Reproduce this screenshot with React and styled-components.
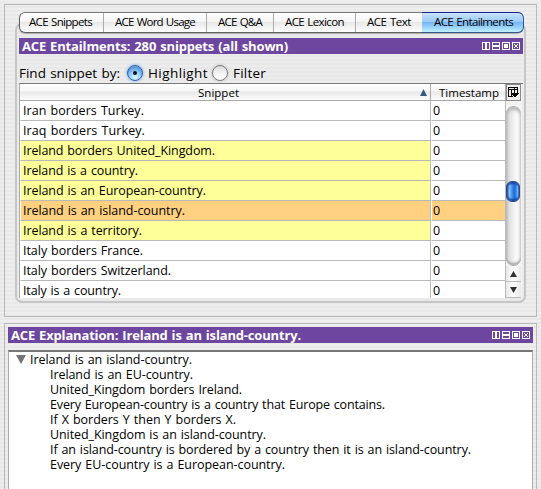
import React, { useLayoutEffect, useRef, useState } from 'react';
import styled, { createGlobalStyle } from 'styled-components';

const GlobalStyle = createGlobalStyle`
  * { box-sizing: border-box; }
  body {
    margin: 0;
    overflow: hidden;
    color: #000;
    font: 12.5px "Open Sans", "Noto Sans", sans-serif;
    background: repeating-linear-gradient(#eeeeee 0 2px, #e8e8e8 2px 4px);
  }
`;

const Window = styled.div`
  height: 489px;
  padding: 4px 4px 0 4px;
  overflow: hidden;
`;

const Panel = styled.section`
  height: ${(p) => p.$height}px;
  margin-bottom: 6px;
  border: 1px solid #b9b9b9;
  padding: ${(p) => p.$padding};
`;

const TabPanel = styled.div`
  display: flex;
  flex-direction: column;
  height: 280px;
  border: 2px solid #c6c6c6;
  border-top-color: #b0b0b0;
  border-radius: 7px;
  padding: 0 0 0 2px;
  background: repeating-linear-gradient(#ececec 0 2px, #e8e8e8 2px 4px);
`;

const Tabs = styled.nav`
  display: grid;
  grid-template-columns: 83px 103px 67px 82px 67px 101px;
  flex: none;
  width: 504px;
  height: 21px;
  margin-top: -13px;
  border: 1px solid #626262;
  border-top-color: #777;
  border-radius: 6px;
  background: linear-gradient(#fff 0, #f4f4f4 45%, #e8e8e8 50%, #fff 100%);
  box-shadow: 0 1px 1px #aaa;
`;

const Tab = styled.div`
  height: 19px;
  padding-left: ${(p) => p.$inset}px;
  border-left: ${(p) => (p.$first ? 0 : '1px solid #aaa')};
  font-size: 11.5px;
  line-height: 18px;
  ${(p) => p.$active && `
    height: 21px;
    margin: -1px -1px 0 0;
    border: 1px solid #35588e;
    border-top-color: #17268b;
    border-left: 0;
    border-radius: 0 6px 6px 0;
    background: linear-gradient(#c9e2fa 0, #9bcaf5 45%, #75b6f2 50%, #bff0ff 100%);
  `}
`;

const TitleBar = styled.header`
  display: flex;
  flex: none;
  align-items: center;
  justify-content: space-between;
  width: ${(p) => p.$width}px;
  height: 16px;
  margin-top: ${(p) => p.$top}px;
  padding: 0 3px;
  background: #6c469f;
  color: #fff;
  font-size: 13px;
  font-weight: 700;
  line-height: 15px;
`;

const FindRow = styled.div`
  display: flex;
  flex: none;
  align-items: center;
  height: 29px;
  padding-top: 9px;
  font-size: 13.5px;
  line-height: 18px;
`;

const Radio = styled.span`
  display: flex;
  align-items: center;
  justify-content: center;
  width: 16px;
  height: 16px;
  margin: 0 ${(p) => p.$after}px 0 ${(p) => p.$before}px;
  border: 1px solid ${(p) => (p.$on ? '#3a5ea0' : '#777')};
  border-radius: 50%;
  background: ${(p) => p.$on
    ? 'radial-gradient(circle at 50% 80%, #d9fbff 0, #8fc8f6 45%, #5796dc 75%, #c7e0f8 100%)'
    : 'linear-gradient(#d8d8d8, #f4f4f4 50%, #fff)'};
  box-shadow: 0 0 3px ${(p) => (p.$on ? '#4da0ec' : '#bbb')};

  &::after {
    content: '';
    width: 4px;
    height: 4px;
    border-radius: 50%;
    background: ${(p) => (p.$on ? '#071225' : 'transparent')};
  }
`;

const TableFrame = styled.div`
  display: grid;
  grid-template-columns: 486px 16px;
  flex: none;
  width: 504px;
  height: 215px;
  border-top: 1px solid #777;
  border-left: 1px solid #aaa;
  overflow: hidden;
`;

const TableBody = styled.div`
  background: #fff;
  overflow: hidden;
`;

const HeaderRow = styled.div`
  display: grid;
  grid-template-columns: 411px 75px;
  height: 17px;
  border-bottom: 1px solid #aaa;
  background: linear-gradient(#fff 0, #f7f7f7 40%, #e9e9e9 50%, #fbfbfb 100%);
  font-size: 11.5px;
  line-height: 15px;
`;

const HeaderCell = styled.div`
  display: flex;
  align-items: center;
  justify-content: space-between;
  padding: 0 ${(p) => p.$right}px 0 ${(p) => p.$left}px;
  border-right: 1px solid #aaa;
`;

const SnippetRow = styled.div`
  display: grid;
  grid-template-columns: 411px 75px;
  height: 20px;
  line-height: 19px;
`;

const rowColors = { plain: '#fff', match: '#ffff99', selected: '#ffd080' };

const SnippetCell = styled.div`
  padding-left: ${(p) => (p.$narrow ? 1 : 2)}px;
  border-right: 1px solid #b9b9b9;
  border-bottom: 1px solid #b9b9b9;
  border-left: 1px solid #fff;
  background: ${(p) => rowColors[p.$tone]};
  white-space: nowrap;
`;

const ScrollColumn = styled.div`
  display: flex;
  flex-direction: column;
  background: #f4f4f4;
`;

const ColumnButton = styled.div`
  display: flex;
  flex: none;
  width: 15px;
  height: 17px;
  border: 1px solid #888;
  background: #eee;
`;

const ScrollTrack = styled.div`
  flex: none;
  height: 160px;
  width: 15px;
  padding-top: 74px;
  border: 1px solid #b4b4b4;
  border-width: 1px 0;
  border-radius: 8px;
  margin-top: 5px;
  background: linear-gradient(90deg, #c4c4c4 0, #e2e2e2 25%, #fafafa 70%, #e8e8e8 100%);
  box-shadow: inset 0 3px 3px #bbb, inset 0 -2px 2px #aaa;
`;

const ScrollThumb = styled.div`
  width: 14px;
  height: 21px;
  border: 1px solid #35497c;
  border-radius: 6px;
  background: linear-gradient(90deg, #194dac 0, #8cc0f8 22%, #4a97ee 38%, #2468dc 60%, #2f7ee8 75%, #76c5ff 90%, #204a9b 100%);
  box-shadow: inset 0 3px 2px -1px #1849a7, inset 0 -3px 2px -1px #1248a0;
`;

const ScrollArrow = styled.div`
  display: flex;
  align-items: center;
  justify-content: center;
  flex: none;
  width: 15px;
  height: 16px;
  border-bottom: 1px solid #bbb;
  background: linear-gradient(90deg, #e8e8e8, #fff 50%, #e9e9e9);
`;

const Explanation = styled.div`
  width: 525px;
  height: 140px;
  margin-top: 7px;
  padding: 0 0 0 7px;
  border: 1px solid #aaa;
  border-top: 2px solid #777;
  background: #fff;
`;

const TreeLine = styled.div`
  display: flex;
  align-items: center;
  gap: 4px;
  height: 15px;
  line-height: 15px;
  padding-left: ${(p) => (p.$child ? 34 : 0)}px;
`;

const Label = styled.span`
  display: inline-block;
  white-space: nowrap;
  word-spacing: 0.8px;
`;

/* Tracks a label so that it fills its allotted width. */
function FitLabel({ text, width }) {
  const ref = useRef(null);
  const [spacing, setSpacing] = useState(0);
  useLayoutEffect(() => {
    ref.current.style.letterSpacing = '0px';
    const natural = ref.current.getBoundingClientRect().width;
    const next = (width - natural) / text.length;
    ref.current.style.letterSpacing = `${next}px`;
    setSpacing(next);
  }, [text, width]);
  return <Label ref={ref} style={{ letterSpacing: `${spacing}px` }}>{text}</Label>;
}

function WindowButtons() {
  return (
    <svg width="38" height="8" viewBox="0 0 38 8" fill="none" stroke="#fff" shapeRendering="crispEdges">
      <path d="M.5 .5h7v7h-7zM10.500 .5h7v7h-7zM20.500 .5h7v7h-7zM30.500 .5h7v7h-7z" />
      <path d="M3 1h2v6h-2zM11 3h6v2h-6zM22 2h4v4h-4z" fill="#fff" stroke="none" />
      <path d="M32 2h1v1h-1zM35 2h1v1h-1zM33 3h2v2h-2zM32 5h1v1h-1zM35 5h1v1h-1z" fill="#fff" stroke="none" />
    </svg>
  );
}

function Triangle({ points, color, width, height }) {
  return <svg width={width} height={height} viewBox="0 0 10 10" preserveAspectRatio="none"><polygon points={points} fill={color} /></svg>;
}

const UP = '5,0 10,10 0,10';
const DOWN = '0,0 10,0 5,10';

const tabs = [
  ['ACE Snippets', 63, 9],
  ['ACE Word Usage', 80, 11],
  ['ACE Q&A', 44, 11],
  ['ACE Lexicon', 59, 11],
  ['ACE Text', 44, 11],
  ['ACE Entailments', 79, 12],
];

const snippets = [
  ['Iran borders Turkey.', 121, 'plain'],
  ['Iraq borders Turkey.', 122, 'plain'],
  ['Ireland borders United_Kingdom.', 192, 'match'],
  ['Ireland is a country.', 115, 'match'],
  ['Ireland is an European-country.', 183, 'match'],
  ['Ireland is an island-country.', 162, 'selected'],
  ['Ireland is a territory.', 119, 'match'],
  ['Italy borders France.', 120, 'plain'],
  ['Italy borders Switzerland.', 148, 'plain'],
  ['Italy is a country.', 98, 'plain'],
];

const reasons = [
  ['Ireland is an EU-country.', 143],
  ['United_Kingdom borders Ireland.', 192],
  ['Every European-country is a country that Europe contains.', 335],
  ['If X borders Y then Y borders X.', 186],
  ['United_Kingdom is an island-country.', 216],
  ['If an island-country is bordered by a country then it is an island-country.', 421],
  ['Every EU-country is a European-country.', 235],
];

export default function App() {
  return (
    <>
      <GlobalStyle />
      <Window>
        <Panel $height={313} $padding="18px 10px 0 10px">
          <TabPanel>
            <Tabs>
              {tabs.map(([text, width, inset], i) => (
                <Tab key={text} $inset={inset} $first={i === 0} $active={i === 5}>
                  <FitLabel text={text} width={width} />
                </Tab>
              ))}
            </Tabs>
            <TitleBar $width={504} $top={5}>
              <FitLabel text="ACE Entailments: 280 snippets (all shown)" width={266} />
              <WindowButtons />
            </TitleBar>
            <FindRow>
              <FitLabel text="Find snippet by:" width={101} />
              <Radio $on $before={7} $after={5} />
              <FitLabel text="Highlight" width={60} />
              <Radio $before={4} $after={5} />
              <FitLabel text="Filter" width={33} />
            </FindRow>
            <TableFrame>
              <TableBody>
                <HeaderRow>
                  <HeaderCell $left={178} $right={3}>
                    <FitLabel text="Snippet" width={41} />
                    <Triangle points={UP} color="#36577f" width={7} height={7} />
                  </HeaderCell>
                  <HeaderCell $left={8} $right={0}>
                    <FitLabel text="Timestamp" width={60} />
                  </HeaderCell>
                </HeaderRow>
                {snippets.map(([text, width, tone]) => (
                  <SnippetRow key={text}>
                    <SnippetCell $tone={tone}><FitLabel text={text} width={width} /></SnippetCell>
                    <SnippetCell $narrow $tone={tone === 'selected' ? 'selected' : 'plain'}>0</SnippetCell>
                  </SnippetRow>
                ))}
              </TableBody>
              <ScrollColumn>
                <ColumnButton>
                  <svg width="13" height="15" viewBox="0 0 13 15" shapeRendering="crispEdges">
                    <path d="M6 11.500H1.500V2.500H10.500V8M1.500 4.500h9M4.500 4.500v7M7.500 2.500v5" fill="none" stroke="#000" />
                    <path d="M4 8h8v1h-1v1h-1v1h-1v1H7v-1H6v-1H5V9H4z" />
                  </svg>
                </ColumnButton>
                <ScrollTrack><ScrollThumb /></ScrollTrack>
                <ScrollArrow><Triangle points={UP} color="#333" width={7} height={6} /></ScrollArrow>
                <ScrollArrow><Triangle points={DOWN} color="#333" width={7} height={6} /></ScrollArrow>
              </ScrollColumn>
            </TableFrame>
          </TabPanel>
        </Panel>
        <Panel $height={180} $padding="3px">
          <TitleBar $width={525} $top={0}>
            <FitLabel text="ACE Explanation: Ireland is an island-country." width={290} />
            <WindowButtons />
          </TitleBar>
          <Explanation>
            <TreeLine>
              <Triangle points={DOWN} color="#737373" width={10} height={9} />
              <FitLabel text="Ireland is an island-country." width={162} />
            </TreeLine>
            {reasons.map(([text, width]) => (
              <TreeLine key={text} $child><FitLabel text={text} width={width} /></TreeLine>
            ))}
          </Explanation>
        </Panel>
      </Window>
    </>
  );
}
